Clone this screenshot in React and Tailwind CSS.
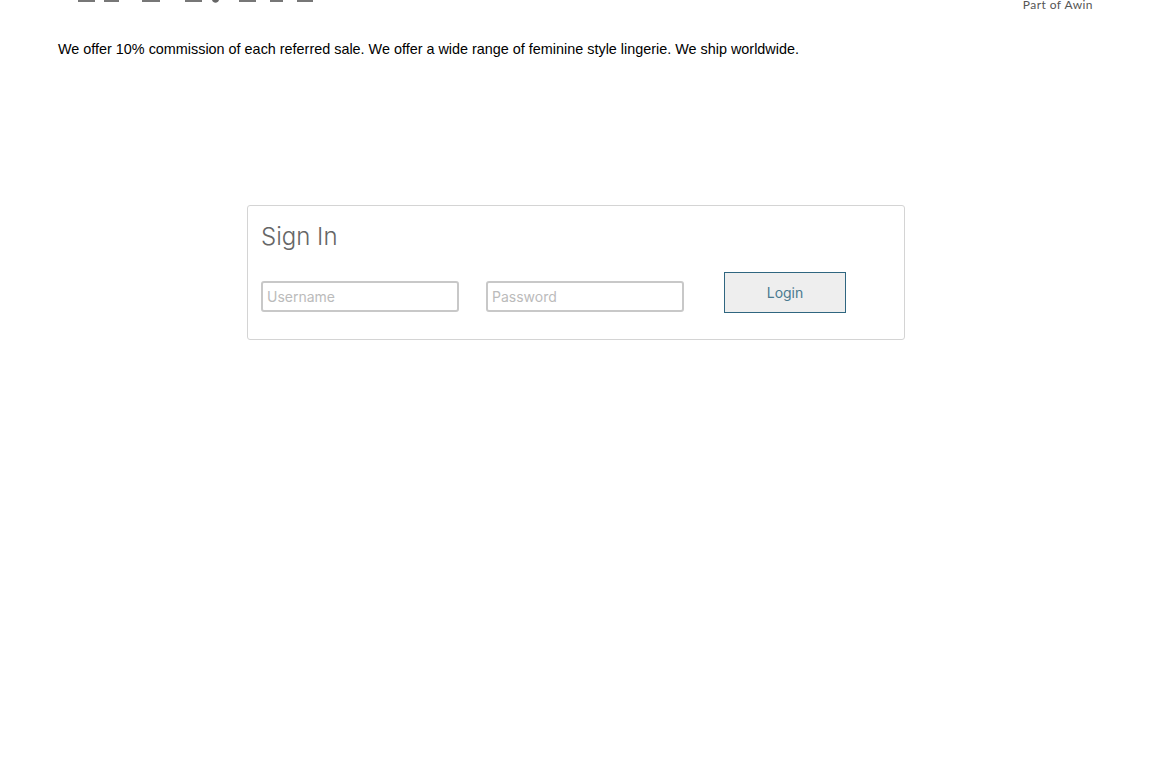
const LOGO_BARS = [
  { x: 18, w: 17 },
  { x: 44, w: 15 },
  { x: 82, w: 18 },
  { x: 125, w: 17 },
  { x: 179, w: 17 },
  { x: 210, w: 13 },
  { x: 237, w: 16 },
]

// Only the bottom edge of the logo is visible, the page is scrolled past the rest
function LogoEdge() {
  return (
    <svg width="260" height="4" viewBox="0 0 260 4" className="block">
      {LOGO_BARS.map(({ x, w }) => (
        <rect key={x} x={x} y="0" width={w} height="2" fill="#777" />
      ))}
      <path d="M152 0 C153 3.5 158 3.5 159 0 Z" fill="#666" />
    </svg>
  )
}

export default function App() {
  return (
    <div className="min-h-screen bg-white font-['Liberation_Sans',sans-serif]">
      <header className="flex h-[11px] justify-between pl-[60px] pr-[59px]">
        <LogoEdge />
        <span className="font-['Lato',sans-serif] text-[12px] leading-[9px] tracking-[0.45px] text-[#555]">
          Part of Awin
        </span>
      </header>

      <p className="mt-[28px] pl-[58px] text-[14.4px] leading-[20px] text-black">
        We offer 10% commission of each referred sale. We offer a wide range of feminine style lingerie. We ship worldwide.
      </p>

      <form className="mx-auto mt-[146px] h-[135px] w-[658px] rounded-[3px] border border-[#d4d4d4] pl-[13px] pt-[15px] font-['Inter',sans-serif]">
        <h1 className="text-[24px] font-light leading-[32px] text-[#666]">Sign In</h1>
        <div className="mt-[19px] flex items-end">
          <input
            placeholder="Username"
            className="h-[31px] w-[198px] rounded-[3px] border-2 border-[#c8c8c8] px-1 text-sm placeholder:text-[#bbbbbb]"
          />
          <input
            placeholder="Password"
            className="ml-[27px] h-[31px] w-[198px] rounded-[3px] border-2 border-[#c8c8c8] px-1 text-sm placeholder:text-[#bbbbbb]"
          />
          <button
            type="button"
            className="ml-10 mb-[-1px] h-[41px] w-[122px] border border-[#2f6680] bg-[#eeeeee] text-sm text-[#4a7a90]"
          >
            Login
          </button>
        </div>
      </form>
    </div>
  )
}
